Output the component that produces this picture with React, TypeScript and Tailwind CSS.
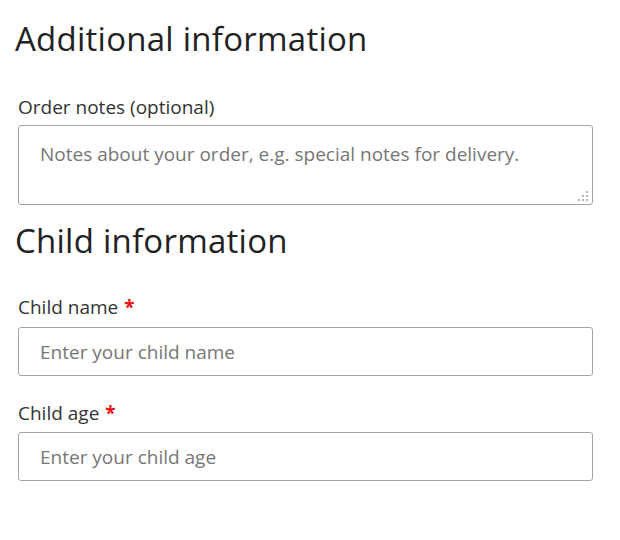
import React from "react";

const font = { fontFamily: '"Open Sans", "Noto Sans", sans-serif' };

const Required = () => <span className="ml-[6px] font-bold text-[#ee1111]">*</span>;

// dotted resize grip in the textarea corner
const Grip = () => (
  <svg
    width="11"
    height="11"
    viewBox="0 0 11 11"
    className="pointer-events-none absolute bottom-[3px] right-[4px]"
    fill="#b5b5b5"
  >
    <rect x="8" y="0" width="2" height="2" />
    <rect x="8" y="4" width="2" height="2" />
    <rect x="4" y="4" width="2" height="2" />
    <rect x="8" y="8" width="2" height="2" />
    <rect x="4" y="8" width="2" height="2" />
    <rect x="0" y="8" width="2" height="2" />
  </svg>
);

const fieldCls =
  "block w-[575px] rounded-[3px] border border-[#a3a3a3] px-[21px] text-[19px] text-[#333] outline-none placeholder:text-[#767676]";

export default function App() {
  return (
    <div className="min-h-[540px] w-[620px] bg-white pl-[18px] text-[#333]" style={font}>
      <h3 className="-ml-[3px] pt-[19px] text-[33px] leading-[40px] font-normal tracking-[0.25px] text-[#222]">
        Additional information
      </h3>

      <div className="mt-[36px]">
        <label className="block text-[19px] leading-[24px] text-[#333]">
          Order notes (optional)
        </label>
        <div className="relative mt-[6px] w-[575px]">
          <textarea
            placeholder="Notes about your order, e.g. special notes for delivery."
            className={`${fieldCls} h-[80px] resize-none pt-[16px] leading-[24px]`}
            style={font}
          />
          <Grip />
        </div>
      </div>

      <h3 className="-ml-[3px] mt-[16px] text-[33px] leading-[40px] font-normal tracking-[0.25px] text-[#222]">
        Child information
      </h3>

      <div className="mt-[34px]">
        <label className="block text-[19px] leading-[24px] text-[#333]">
          Child name
          <Required />
        </label>
        <input
          type="text"
          placeholder="Enter your child name"
          className={`${fieldCls} mt-[8px] h-[49px]`}
          style={font}
        />
      </div>

      <div className="mt-[25px]">
        <label className="block text-[19px] leading-[24px] text-[#333]">
          Child age
          <Required />
        </label>
        <input
          type="text"
          placeholder="Enter your child age"
          className={`${fieldCls} mt-[7px] h-[49px]`}
          style={font}
        />
      </div>
    </div>
  );
}
